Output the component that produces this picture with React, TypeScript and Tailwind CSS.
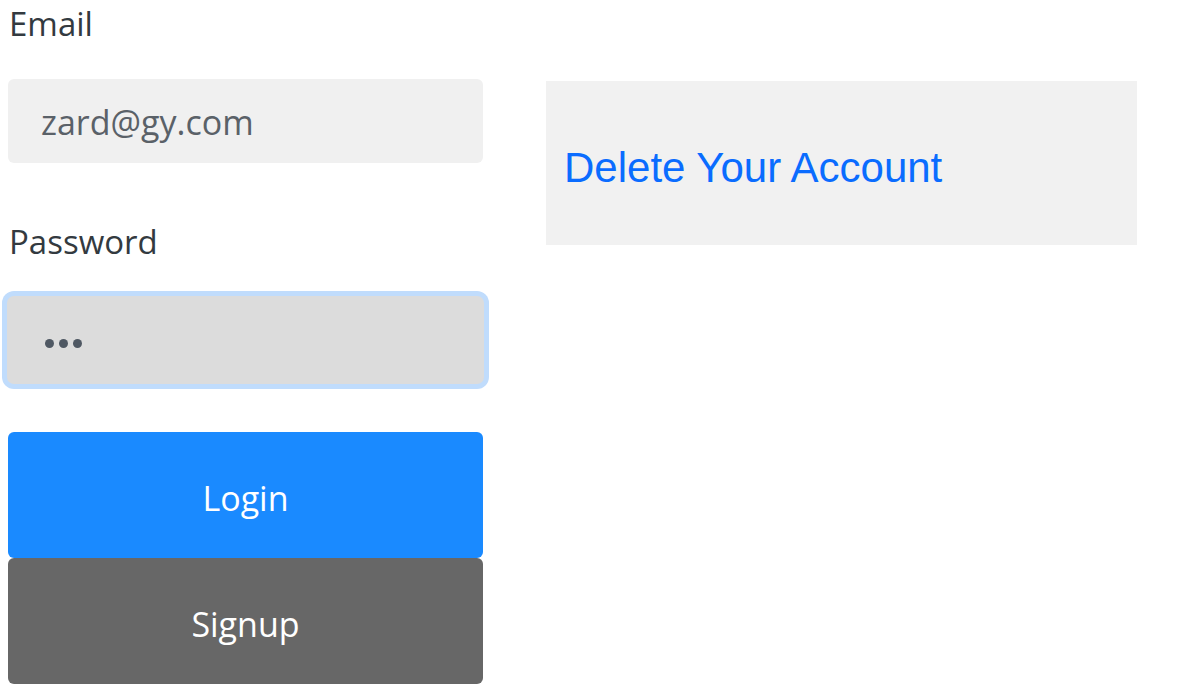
import React from "react";

export default function App() {
  const font = { fontFamily: '"Open Sans", "Noto Sans", sans-serif' };
  return (
    <div className="flex items-start bg-white min-h-[699px] pl-[8px]" style={font}>
      <div className="w-[475px] flex flex-col">
        <label className="block text-[33px] leading-[48px] text-[#333a40] pl-[1px]">Email</label>
        <div className="mt-[31px] h-[84px] rounded-[6px] bg-[#f0f0f0] flex items-center pl-[33px] pt-[3px] text-[34px] text-[#5a6168]">
          zard@gy.com
        </div>
        <label className="block mt-[57px] text-[33px] leading-[44px] text-[#333a40] pl-[1px]">Password</label>
        <div className="mt-[32px] h-[88px] -mx-[1px] rounded-[7px] bg-[#dcdcdc] flex items-center pl-[38px] pt-[6px] ring-[5px] ring-[#c0dcfc] text-[#4f5863]">
          <span className="flex gap-[5px]">
            <span className="w-[9px] h-[9px] rounded-full bg-[#4f5863]" />
            <span className="w-[9px] h-[9px] rounded-full bg-[#4f5863]" />
            <span className="w-[9px] h-[9px] rounded-full bg-[#4f5863]" />
          </span>
        </div>
        <button className="mt-[48px] h-[126px] rounded-[6px] bg-[#1a8aff] text-white text-[34px] flex items-center justify-center pt-[6px]">
          Login
        </button>
        <button className="h-[126px] rounded-[6px] bg-[#676767] text-white text-[34px] flex items-center justify-center pt-[6px]">
          Signup
        </button>
      </div>
      <div
        className="ml-[63px] mt-[81px] w-[591px] h-[164px] bg-[#f1f1f1] flex items-center pl-[18px] pt-[8px] text-[42px] text-[#0a6cff]"
        style={{ fontFamily: '"Liberation Sans", Arial, sans-serif' }}
      >
        Delete Your Account
      </div>
    </div>
  );
}
